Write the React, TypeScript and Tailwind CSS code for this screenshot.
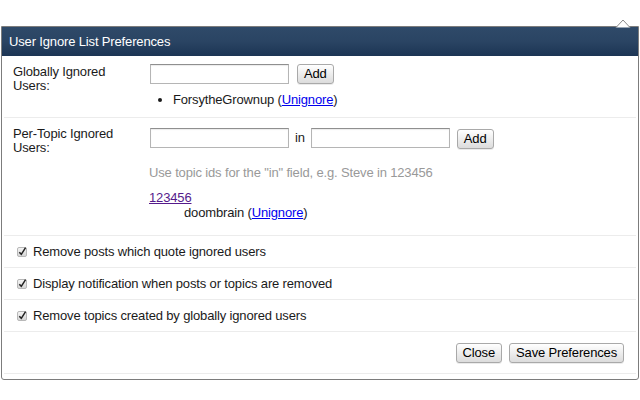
import React from "react";

const font = { fontFamily: '"Liberation Sans", Arial, sans-serif' };

function Btn({ children }: { children: React.ReactNode }) {
  return (
    <button className="h-[20px] px-[6px] rounded-[3px] border border-[#a9a9a9] bg-gradient-to-b from-[#ffffff] to-[#dcdcdc] text-[13px] leading-[18px] text-black shadow-[0_1px_0_rgba(0,0,0,0.08)] tracking-[-0.15px]">
      {children}
    </button>
  );
}

function Input({ w }: { w: string }) {
  return (
    <div className={`${w} h-[20px] bg-white border border-[#b5b5b5] border-t-[#8f8f8f] shadow-[inset_0_1px_1px_rgba(0,0,0,0.08)]`} />
  );
}

function Check() {
  return (
    <svg width="11" height="11" viewBox="0 0 11 11" className="shrink-0">
      <defs>
        <linearGradient id="cb" x1="0" y1="0" x2="0" y2="1">
          <stop offset="0" stopColor="#f6f6f6" />
          <stop offset="1" stopColor="#d4d4d4" />
        </linearGradient>
      </defs>
      <rect x="0.5" y="1.5" width="9" height="9" rx="1.5" fill="url(#cb)" stroke="#b8b8b8" />
      <path d="M2.3 6.2 L4.3 8.3 L8.6 1.6" fill="none" stroke="#222" strokeWidth="1.5" />
    </svg>
  );
}

function CheckRow({ label }: { label: string }) {
  return (
    <div className="h-[32px] flex items-center gap-[5px] pl-[13px] border-b border-[#ececec]">
      <Check />
      <span className="text-[13px] text-[#1a1a1a]">{label}</span>
    </div>
  );
}

export default function App() {
  return (
    <div className="w-[640px] h-[400px] bg-white pt-[26px] tracking-[-0.15px]" style={font}>
      <div className="relative ml-[1px] w-[638px] h-[354px] border border-[#7c7c7c] rounded-b-[3px] bg-white">
        {/* arrow */}
        <svg width="18" height="9" viewBox="0 0 18 9" className="absolute left-[613px] top-[-8px]">
          <path d="M1 8.5 L8 1 L15 8.5" fill="white" stroke="#8a8a8a" strokeWidth="1" />
        </svg>
        {/* header */}
        <div className="h-[29px] bg-gradient-to-b from-[#2f4a69] via-[#2a4463] to-[#1c3554] flex items-center pl-[7px]">
          <span className="text-white text-[13px]">User Ignore List Preferences</span>
        </div>
        <div className="mx-[2px]">
          {/* row 1 */}
          <div className="flex border-b border-[#ececec] h-[62px] pt-[8px]">
            <div className="w-[146px] pl-[9px] text-[13px] leading-[14px] text-[#1a1a1a] pt-[1px]">
              Globally Ignored
              <br />
              Users:
            </div>
            <div className="flex flex-col">
              <div className="flex items-center gap-[8px]">
                <Input w="w-[139px]" />
                <Btn>Add</Btn>
              </div>
              <ul className="mt-[8px] pl-[23px] list-disc text-[13px] leading-[16px] text-[#1a1a1a]">
                <li>
                  ForsytheGrownup (<a className="text-[#0000ee] underline">Unignore</a>)
                </li>
              </ul>
            </div>
          </div>
          {/* row 2 */}
          <div className="flex border-b border-[#ececec] h-[118px] pt-[8px]">
            <div className="w-[146px] pl-[9px] text-[13px] leading-[14px] text-[#1a1a1a] pt-[1px]">
              Per-Topic Ignored
              <br />
              Users:
            </div>
            <div className="flex flex-col">
              <div className="flex items-center">
                <Input w="w-[139px]" />
                <span className="text-[13px] text-[#1a1a1a] ml-[6px] mr-[6px]">in</span>
                <Input w="w-[139px]" />
                <div className="ml-[7px]">
                  <Btn>Add</Btn>
                </div>
              </div>
              <div className="mt-[15px] text-[13px] leading-[16px] text-[#999] -ml-[1px]">
                Use topic ids for the "in" field, e.g. Steve in 123456
              </div>
              <div className="mt-[10px] text-[13px] leading-[14px] -ml-[1px]">
                <a className="text-[#551a8b] underline">123456</a>
              </div>
              <div className="pl-[34px] text-[13px] leading-[16px] text-[#1a1a1a]">
                doombrain (<a className="text-[#0000ee] underline">Unignore</a>)
              </div>
            </div>
          </div>
          <CheckRow label="Remove posts which quote ignored users" />
          <CheckRow label="Display notification when posts or topics are removed" />
          <CheckRow label="Remove topics created by globally ignored users" />
          {/* footer */}
          <div className="h-[42px] flex items-center justify-end gap-[7px] pr-[12px] border-b border-[#ececec] pt-[1px]">
            <Btn>Close</Btn>
            <Btn>Save Preferences</Btn>
          </div>
        </div>
      </div>
    </div>
  );
}
